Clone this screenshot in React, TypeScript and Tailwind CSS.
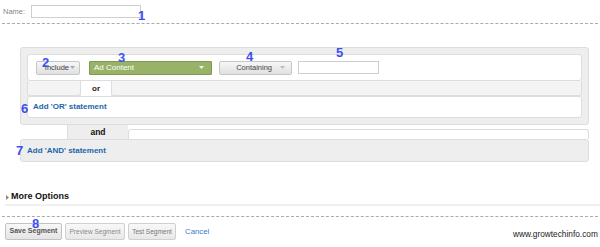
import React from 'react';

const Caret = ({ color = '#999' }: { color?: string }) => (
    <svg width="5" height="3" viewBox="0 0 5 3" className="shrink-0">
        <path d="M0 0 L5 0 L2.5 3 Z" fill={color} />
    </svg>
);

const Marker = ({ n, className }: { n: string; className: string }) => (
    <span className={`absolute text-[13px] leading-none font-bold text-[#3c50f0] ${className}`}>{n}</span>
);

export default function App() {
    return (
        <div className="relative w-[600px] h-[247px] overflow-hidden bg-white font-['Liberation_Sans',Arial,sans-serif]">
            {/* Name */}
            <div className="h-[23px] flex items-start pt-[5px] pl-[3px]">
                <span className="text-[7.5px] leading-[13px] text-[#888]">Name:</span>
                <div className="ml-[6px] w-[110px] h-[13px] border border-[#cfcfcf] bg-white"></div>
            </div>
            <div className="mx-[2px] border-t border-dashed border-[#aaa]"></div>

            {/* Condition panel */}
            <div className="mt-[23px] ml-[20px] w-[569px] bg-[#eee] border border-[#ddd] rounded-[3px] p-[6px]">
                <div className="h-[27px] bg-white border border-[#ddd] rounded-[3px] flex items-center pl-[8px]">
                    <div className="w-[44px] h-[14px] flex items-center justify-end gap-[1px] pr-[4px] border border-[#c6c6c6] rounded-[2px] bg-gradient-to-b from-[#f7f7f7] to-[#e0e0e0] text-[7.5px] text-[#444]">
                        <span>Include</span>
                        <Caret color="#aaa" />
                    </div>
                    <div className="ml-[9px] w-[123px] h-[14px] flex items-center justify-between px-[4px] border border-[#7d9a4e] rounded-[1px] bg-[#98b268] text-[8px] text-white">
                        <span>Ad Content</span>
                        <span className="mr-[3px]"><Caret color="#f2f2f2" /></span>
                    </div>
                    <div className="ml-[7px] w-[73px] h-[14px] flex items-center justify-end gap-[8px] pr-[6px] border border-[#c6c6c6] rounded-[2px] bg-gradient-to-b from-[#f7f7f7] to-[#e0e0e0] text-[7.5px] text-[#444]">
                        <span>Containing</span>
                        <Caret color="#bbb" />
                    </div>
                    <div className="ml-[6px] w-[81px] h-[13px] border border-[#cfcfcf] bg-white"></div>
                </div>
                <div className="h-[15px] flex">
                    <div className="w-[54px] border-x border-b border-[#ddd] rounded-b-[3px] bg-[#f4f4f4]"></div>
                    <div className="w-[30px] bg-white flex items-center justify-center text-[8px] font-bold text-[#222]">or</div>
                    <div className="flex-1 border-x border-b border-[#ddd] rounded-b-[3px] bg-[#f4f4f4]"></div>
                </div>
                <div className="h-[22px] bg-white border border-[#ddd] rounded-[3px] flex items-center pl-[5px] text-[8px] font-bold text-[#2266aa]">
                    Add 'OR' statement
                </div>
            </div>

            {/* and */}
            <div className="h-[14px] flex">
                <div className="w-[68px] border-r border-[#ddd]"></div>
                <div className="w-[60px] bg-[#eee] flex items-center justify-center text-[8.5px] font-bold text-[#111]">and</div>
                <div className="w-[461px] mt-[4px] border-l border-t border-r border-[#ddd] rounded-t-[3px]"></div>
            </div>
            <div className="ml-[20px] w-[569px] h-[23px] bg-[#eee] border border-[#ddd] rounded-[3px] flex items-center pl-[6px] text-[8px] font-bold text-[#2266aa]">
                Add 'AND' statement
            </div>

            {/* More options */}
            <div className="mt-[28px] ml-[5px] h-[16px] border-b-2 border-[#f0f0f0] flex items-center gap-[2px] pl-[1px]">
                <svg width="3" height="5" viewBox="0 0 3 5"><path d="M0 0 L3 2.5 L0 5 Z" fill="#888" /></svg>
                <span className="text-[9px] font-bold text-[#111]">More Options</span>
            </div>
            <div className="mt-[10px] mx-[2px] border-t border-dashed border-[#aaa]"></div>

            {/* Actions */}
            <div className="mt-[6px] pl-[5px] flex items-center">
                <div className="w-[57px] h-[17px] flex items-center justify-center border border-[#c2c2c2] rounded-[2px] bg-gradient-to-b from-[#f8f8f8] to-[#e4e4e4] text-[7px] font-bold text-[#555]">Save Segment</div>
                <div className="ml-[3px] w-[60px] h-[17px] flex items-center justify-center border border-[#d0d0d0] rounded-[2px] bg-gradient-to-b from-[#f8f8f8] to-[#e8e8e8] text-[6.5px] text-[#888]">Preview Segment</div>
                <div className="ml-[3px] w-[48px] h-[17px] flex items-center justify-center border border-[#d0d0d0] rounded-[2px] bg-gradient-to-b from-[#f8f8f8] to-[#e8e8e8] text-[6.5px] text-[#777]">Test Segment</div>
                <span className="ml-[9px] text-[7.8px] text-[#3a7bc8]">Cancel</span>
            </div>

            <span className="absolute left-[513px] top-[228px] text-[8.3px] text-[#222]">www.growtechinfo.com</span>

            <Marker n="1" className="left-[138px] top-[9px]" />
            <Marker n="2" className="left-[42px] top-[56px]" />
            <Marker n="3" className="left-[118px] top-[51px]" />
            <Marker n="4" className="left-[246px] top-[50px]" />
            <Marker n="5" className="left-[336px] top-[46px]" />
            <Marker n="6" className="left-[21px] top-[102px]" />
            <Marker n="7" className="left-[16px] top-[144px]" />
            <Marker n="8" className="left-[32px] top-[217px]" />
        </div>
    );
}
